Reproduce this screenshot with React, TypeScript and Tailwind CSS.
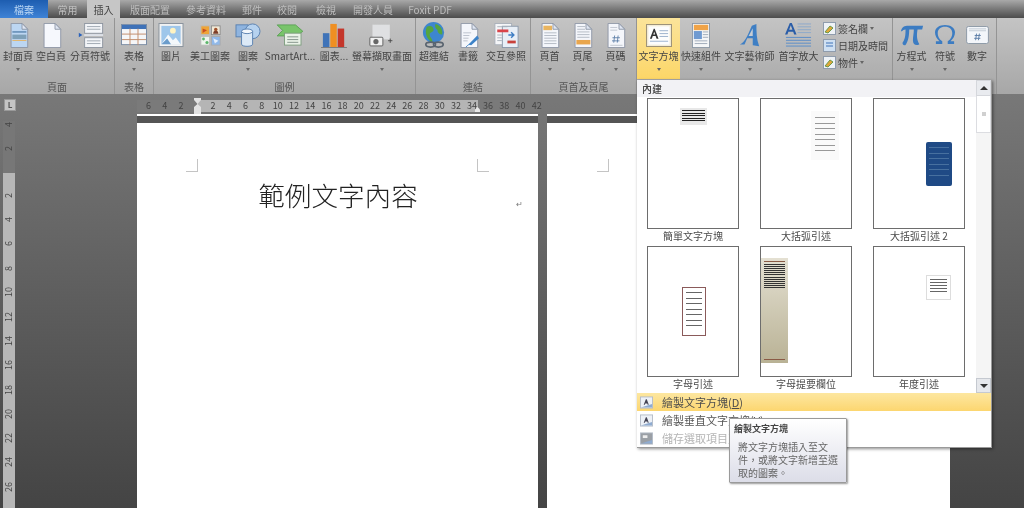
import React from "react";

const Doc = ({ children, fill = "#f4f6fb" }: { children?: React.ReactNode; fill?: string }) => (
  <svg width="21" height="25" viewBox="0 0 24 28" preserveAspectRatio="none">
    <path d="M3.5 .5H16L22.5 7V27.5H3.5Z" fill={fill} stroke="#8a93a3" />
    <path d="M16 .5V7H22.5Z" fill="#dfe6f2" stroke="#8a93a3" />
    {children}
  </svg>
);

const Icons: Record<string, React.ReactNode> = {
  cover: (
    <Doc fill="#bcd6f2">
      <rect x="5" y="9" width="16" height="2" fill="#6f96bd" />
      <rect x="5" y="13" width="16" height="5" fill="#7ea0b8" />
      <rect x="5" y="19" width="16" height="1" fill="#e7b25c" />
    </Doc>
  ),
  blank: <Doc fill="#f6f8fd" />,
  pagebreak: (
    <svg width="27" height="25" viewBox="0 0 30 28" preserveAspectRatio="none">
      <rect x="8.5" y=".5" width="20" height="11" fill="#f3f5f8" stroke="#8b939e" />
      <path d="M11 4H26M11 7H26" stroke="#9aa3ad" />
      <path d="M8 13.5H29" stroke="#dfe3ea" strokeWidth="2" />
      <rect x="8.5" y="16.5" width="20" height="11" fill="#f3f5f8" stroke="#8b939e" />
      <path d="M11 20H26M11 23H26" stroke="#9aa3ad" />
      <path d="M2 11L6 13.5L2 16Z" fill="#2a62bb" />
    </svg>
  ),
  table: (
    <svg width="26" height="22" viewBox="0 0 26 24" preserveAspectRatio="none">
      <rect x=".5" y=".5" width="25" height="22" fill="#f5f6f8" stroke="#7b8da5" />
      <rect x="1" y="1" width="24" height="4.5" fill="#3f72b8" />
      <path d="M9 5V23M17 5V23M1 11H25M1 17H25" stroke="#c18d6b" />
    </svg>
  ),
  picture: (
    <svg width="26" height="25" viewBox="0 0 26 26">
      <rect x=".5" y=".5" width="25" height="24" fill="#f1f2f2" stroke="#88919c" />
      <rect x="3" y="3" width="20" height="19" fill="#9ec6ea" />
      <circle cx="15" cy="8" r="3" fill="#fff3c2" />
      <path d="M3 22L10 12L15 18L18 15L23 22Z" fill="#f4f8fb" />
      <path d="M3 22L9 16L13 22Z" fill="#6a9ccb" />
    </svg>
  ),
  clip: (
    <svg width="21" height="21" viewBox="0 0 24 24">
      <rect x="1" y="1" width="10" height="10" fill="#eea437" stroke="#bbb" />
      <path d="M3 4L8 6L3 9Z" fill="#c94f22" />
      <rect x="13" y="1" width="10" height="10" fill="#f2e9d6" stroke="#888" />
      <path d="M15 10C15 5 21 5 21 10Z" fill="#7b3f2b" />
      <circle cx="18" cy="5" r="2" fill="#a0522d" />
      <rect x="1" y="13" width="10" height="10" fill="#eef5ee" stroke="#bbb" />
      <circle cx="4" cy="16" r="1.6" fill="#5bb56a" />
      <circle cx="8" cy="20" r="1.8" fill="#5bb56a" />
      <rect x="13" y="13" width="10" height="10" fill="#8fb8ea" stroke="#aaa" />
      <path d="M15 15L21 18L17 21Z" fill="#e3effc" />
    </svg>
  ),
  shapes: (
    <svg width="26" height="24" viewBox="0 0 28 26">
      <rect x="1" y="2" width="13" height="13" fill="#8fb4df" stroke="#577fb0" />
      <circle cx="19" cy="9" r="8" fill="#b6d2ef" stroke="#577fb0" />
      <path d="M7 9V23C7 26 19 26 19 23V9Z" fill="#dce9f6" stroke="#577fb0" />
      <ellipse cx="13" cy="9" rx="6" ry="2.5" fill="#f2f7fc" stroke="#577fb0" />
    </svg>
  ),
  smartart: (
    <svg width="28" height="22" viewBox="0 0 30 24">
      <path d="M1 1H21L29 8L22 13H1L7 7Z" fill="#79c46b" stroke="#5aa153" />
      <rect x="9" y="10" width="18" height="13" fill="#eaf2e8" stroke="#7d9d7e" />
      <path d="M12 14H24M12 17H24M12 20H24" stroke="#7f8f85" />
    </svg>
  ),
  chart: (
    <svg width="26" height="25" viewBox="0 0 28 27">
      <rect x="2" y="11" width="7" height="15" fill="#3f73b8" />
      <rect x="10" y="1" width="7" height="25" fill="#ef8f22" />
      <rect x="18" y="6" width="7" height="20" fill="#c4362b" />
      <path d="M0 26.5H28" stroke="#777" />
    </svg>
  ),
  screenshot: (
    <svg width="26" height="25" viewBox="0 0 30 26">
      <rect x="4" y=".5" width="20" height="17" fill="#dfe0e2" />
      <rect x="1" y="15" width="15" height="10" rx="1" fill="#f0f0f0" stroke="#555" />
      <circle cx="8" cy="20" r="3" fill="#666" />
      <path d="M22 19H27M24.500 16.500V21.500" stroke="#444" />
    </svg>
  ),
  link: (
    <svg width="25" height="26" viewBox="0 0 26 27">
      <circle cx="12" cy="11" r="11" fill="#3d86cf" />
      <path d="M5 5C9 3 12 5 12 8C12 11 8 10 8 13C8 16 11 17 11 21C6 20 2 12 5 5ZM14 2C19 3 22 8 21 13C18 13 16 11 16 8C14 7 13 4 14 2Z" fill="#55a53f" />
      <ellipse cx="9" cy="23.500" rx="5" ry="2.500" fill="none" stroke="#5a6570" strokeWidth="1.800" />
      <ellipse cx="17" cy="23.500" rx="5" ry="2.500" fill="none" stroke="#5a6570" strokeWidth="1.800" />
    </svg>
  ),
  bookmark: (
    <Doc>
      <path d="M6 11H15M6 14H13M6 17H12M6 20H11" stroke="#b6bcc8" />
      <path d="M12 24L22 14L24 17L15 25Z" fill="#3c82c8" />
      <path d="M9 27C11 25 13 23 15 24" stroke="#3c82c8" fill="none" />
    </Doc>
  ),
  xref: (
    <svg width="25" height="25" viewBox="0 0 26 27">
      <rect x=".5" y=".5" width="18" height="23" fill="#f5f6f8" stroke="#a9b0ba" />
      <rect x="8.500" y="3.500" width="17" height="23" fill="#e8eff7" stroke="#8a98a9" />
      <rect x="3" y="7" width="12" height="3" fill="#d9444a" />
      <path d="M3 4H14M3 13H8M3 16H8M3 19H8" stroke="#a8b0ba" />
      <rect x="14" y="19" width="9" height="3" fill="#c8423c" />
      <path d="M15 13H21M18 10L21 13L18 16" stroke="#3f7ec4" fill="none" strokeWidth="1.500" />
    </svg>
  ),
  header: (
    <Doc>
      <rect x="5" y="3" width="10" height="5" fill="#e9b45f" />
      <path d="M6 11H20M6 14H20M6 17H20M6 20H20M6 23H20" stroke="#aeb5c0" />
    </Doc>
  ),
  footer: (
    <Doc>
      <path d="M6 4H15M6 7H15M6 10H20M6 13H20M6 16H20" stroke="#aeb5c0" />
      <rect x="5" y="19" width="16" height="5" fill="#e9a64d" />
    </Doc>
  ),
  pagenum: (
    <Doc>
      <path d="M6 5H14M6 8H14" stroke="#bcc2cc" />
      <path d="M11 14L10 22M15 14L14 22M8.500 16.500H17M8 20H16.500" stroke="#5d7fa8" />
      <path d="M6 25H20" stroke="#bcc2cc" />
    </Doc>
  ),
  textbox: (
    <svg width="26" height="23" viewBox="0 0 27 24">
      <rect x=".5" y=".5" width="26" height="23" fill="#f3ecd8" stroke="#9a8f76" />
      <rect x="2.500" y="2.500" width="22" height="19" fill="#fdfdfd" />
      <path d="M4 15.500L8 5H9L13 15.500H11L10 12.500H7L6 15.500ZM7.500 11H9.500L8.500 8Z" fill="#333" />
      <path d="M14 7H23M14 10H23M14 13H23M4 18H23" stroke="#9bb1cc" />
    </svg>
  ),
  parts: (
    <svg width="18" height="25" viewBox="0 0 20 28" preserveAspectRatio="none">
      <rect x=".5" y=".5" width="19" height="27" fill="#f5f6f7" stroke="#8b97a5" />
      <rect x="2" y="2" width="16" height="6" fill="#f0a347" />
      <rect x="2" y="9" width="9" height="9" fill="#6f9ad1" />
      <path d="M12 10H18M12 13H18M12 16H18M3 20H17M3 23H17" stroke="#9aa5b5" />
    </svg>
  ),
  wordart: (
    <svg width="22" height="25" viewBox="0 0 24 28" preserveAspectRatio="none">
      <path d="M1 24C6 22 9 15 14 3L19 1C19 9 19 18 22 26L15 25L15 17L9 17L6 24Z" fill="#3f7fc4" />
      <path d="M10.500 14.500L15 6V14.500Z" fill="#c8cdd3" />
    </svg>
  ),
  dropcap: (
    <svg width="27" height="26" viewBox="0 0 28 27">
      <path d="M0 13L5 1H7L12 13H9.500L8.500 10H3.500L2.500 13ZM4.300 8H7.700L6 3.500Z" fill="#2a5da8" />
      <path d="M13 2H27M13 5H27M13 8H27M13 11H27" stroke="#8da9ca" />
      <path d="M1 16H27M1 19H27M1 22H27M1 25H27" stroke="#5a8cc8" />
    </svg>
  ),
  pi: (
    <svg width="24" height="22" viewBox="0 0 26 24" preserveAspectRatio="none">
      <path d="M1 8C2 3 5 2 9 2H25L24 6H19C18 12 18 17 21 22C18 24 14 23 14 18C14 14 15 10 15 6H10C10 12 9 19 6 23C4 24 2 22 3 20C6 16 6 10 6 6C4 6 3 7 2 8Z" fill="#3c7cc2" />
    </svg>
  ),
  omega: (
    <svg width="22" height="20" viewBox="0 0 24 22">
      <path d="M2 21H9V18C5 15 4 12 4 9C4 5 7 2 12 2C17 2 20 5 20 9C20 12 19 15 15 18V21H22V18H18C21 15 23 12 23 8C23 3 18 0 12 0C6 0 1 3 1 8C1 12 3 15 6 18H2Z" fill="#3c7cc2" />
    </svg>
  ),
  numeral: (
    <svg width="23" height="18" viewBox="0 0 24 19">
      <rect x=".5" y=".5" width="23" height="18" rx="2" fill="#f3f6fa" stroke="#8b97a5" />
      <path d="M3 3H21M3 5H21" stroke="#c2cad5" />
      <path d="M11 8L10 15M14 8L13 15M9 10H15.500M8.500 13H15" stroke="#5d7fa8" />
    </svg>
  ),
};

const Caret = () => <span className="w-0 h-0 border-x-[2.5px] border-x-transparent border-t-[3px] border-t-[#666]" />;

const RibbonButton = ({
  w,
  icon,
  label,
  arrow,
  active,
}: {
  w: string;
  icon: string;
  label: string;
  arrow?: boolean;
  active?: boolean;
}) => (
  <div
    className={`${w} h-[61px] shrink-0 flex flex-col items-center ${
      active ? "bg-gradient-to-b from-[#fbe49a] to-[#fcd667]" : ""
    }`}
  >
    <div className="h-[31px] pt-[3px] flex items-center justify-center">{Icons[icon]}</div>
    <div className="h-[14px] leading-[14px] text-[10px] text-[#444] whitespace-nowrap">{label}</div>
    {arrow && (
      <div className="h-[12px] flex items-center justify-center">
        <Caret />
      </div>
    )}
  </div>
);

const Group = ({ w, label, children, pl }: { w: string; label?: string; children: React.ReactNode; pl?: string }) => (
  <div className={`${w} shrink-0 h-full flex flex-col border-r border-r-[#949494]`}>
    <div className={`h-[61px] flex ${pl ?? ""}`}>{children}</div>
    <div className="flex-1 flex items-center justify-center text-[10px] text-[#555]">{label}</div>
  </div>
);

const tabs: [string, string][] = [
  ["w-[39px]", "常用"],
  ["w-[33px]", "插入"],
  ["w-[60px]", "版面配置"],
  ["w-[52px]", "參考資料"],
  ["w-[40px]", "郵件"],
  ["w-[30px]", "校閱"],
  ["w-[48px]", "檢視"],
  ["w-[46px]", "開發人員"],
  ["w-[68px]", "Foxit PDF"],
];

const rulerLeft = ["6", "4", "2"];
const rulerMid = ["2", "4", "6", "8", "10", "12", "14", "16", "18", "20", "22", "24", "26", "28", "30", "32", "34"];
const rulerRight = ["36", "38", "40", "42"];
const RulerNum = ({ n }: { n: string }) => (
  <span className="w-[16.2px] shrink-0 text-center text-[9px] leading-[12px]">{n}</span>
);

const VNum = ({ n, h }: { n: string; h: string }) => (
  <div className={`${h} shrink-0 flex items-center justify-center`}>
    <span className="[writing-mode:vertical-rl] rotate-180 text-[9px] leading-[10px] text-[#444]">{n}</span>
  </div>
);

const Corner = () => <div className="w-[12px] h-[13px] border-r border-b border-[#c4c4c4]" />;
const CornerR = () => <div className="w-[12px] h-[13px] border-l border-b border-[#c4c4c4]" />;

const Lines = ({ n, color = "bg-[#555]", gap = "gap-[2px]" }: { n: number; color?: string; gap?: string }) => (
  <div className={`flex flex-col ${gap}`}>
    {Array.from({ length: n }).map((_, i) => (
      <div key={i} className={`h-[1px] w-full ${color}`} />
    ))}
  </div>
);

const Thumb = ({ label, pad, children }: { label: string; pad: string; children: React.ReactNode }) => (
  <div className="w-[92px] h-[148px] flex flex-col items-center">
    <div className={`w-[92px] h-[131px] shrink-0 border border-[#6d6d6d] bg-white flex items-start ${pad}`}>{children}</div>
    <div className="text-[10px] leading-[13px] pt-[0px] text-[#4a4a4a] whitespace-nowrap">{label}</div>
  </div>
);

const MenuIcon = ({ kind }: { kind: "a" | "v" | "s" }) => (
  <svg width="13" height="13" viewBox="0 0 14 13">
    <rect x=".5" y=".5" width="13" height="12" fill={kind === "s" ? "#9a9fa5" : "#edf1f7"} stroke="#b4bcc8" />
    <path d="M1 12L13 12L13 8Z" fill="#8fabd0" />
    {kind !== "s" && <path d="M4 9L6.300 3H7.300L9.500 9H8.300L7.800 7.500H5.700L5.200 9Z" fill="#445" />}
    {kind === "s" && <rect x="3" y="3" width="5" height="3" fill="#eee" />}
  </svg>
);

export default function App() {
  return (
    <div
      className="relative w-[1024px] h-[508px] overflow-hidden flex flex-col bg-[#555] blur-[0.5px]"
      style={{ fontFamily: '"Noto Sans CJK TC", "Noto Sans", sans-serif' }}
    >
      {/* tabs */}
      <div className="h-[18px] flex shrink-0 bg-gradient-to-b from-[#a9a9a9] to-[#4c4c4c] text-[10px]">
        <div className="w-[48px] flex items-center justify-center bg-gradient-to-b from-[#1d5db0] to-[#3f83d6] text-[#bcd8f5]">檔案</div>
        {tabs.map(([w, t]) => (
          <div
            key={t}
            className={`${w} flex items-center justify-center whitespace-nowrap ${
              t === "插入" ? "bg-[#c6c6c6] text-[#444]" : "text-[#bdbdbd]"
            }`}
          >
            {t}
          </div>
        ))}
      </div>

      {/* ribbon */}
      <div className="h-[76px] shrink-0 flex bg-gradient-to-b from-[#c4c4c4] to-[#a7a7a7]">
        <Group w="w-[115px]" label="頁面">
          <RibbonButton w="w-[36px]" icon="cover" label="封面頁" arrow />
          <RibbonButton w="w-[30px]" icon="blank" label="空白頁" />
          <RibbonButton w="w-[48px]" icon="pagebreak" label="分頁符號" />
        </Group>
        <Group w="w-[39px]" label="表格">
          <RibbonButton w="w-[38px]" icon="table" label="表格" arrow />
        </Group>
        <Group w="w-[262px]" label="圖例">
          <RibbonButton w="w-[34px]" icon="picture" label="圖片" />
          <RibbonButton w="w-[44px]" icon="clip" label="美工圖案" />
          <RibbonButton w="w-[32px]" icon="shapes" label="圖案" arrow />
          <RibbonButton w="w-[52px]" icon="smartart" label="SmartArt..." />
          <RibbonButton w="w-[36px]" icon="chart" label="圖表..." />
          <RibbonButton w="w-[60px]" icon="screenshot" label="螢幕擷取畫面" arrow />
        </Group>
        <Group w="w-[115px]" label="連結">
          <RibbonButton w="w-[36px]" icon="link" label="超連結" />
          <RibbonButton w="w-[32px]" icon="bookmark" label="書籤" />
          <RibbonButton w="w-[44px]" icon="xref" label="交互參照" />
        </Group>
        <Group w="w-[106px]" label="頁首及頁尾" pl="pl-[2px]">
          <RibbonButton w="w-[33px]" icon="header" label="頁首" arrow />
          <RibbonButton w="w-[33px]" icon="footer" label="頁尾" arrow />
          <RibbonButton w="w-[33px]" icon="pagenum" label="頁碼" arrow />
        </Group>
        <Group w="w-[256px]">
          <RibbonButton w="w-[43px]" icon="textbox" label="文字方塊" arrow active />
          <RibbonButton w="w-[42px]" icon="parts" label="快速組件" arrow />
          <RibbonButton w="w-[55px]" icon="wordart" label="文字藝術師" arrow />
          <RibbonButton w="w-[43px]" icon="dropcap" label="首字放大" arrow />
          <div className="flex flex-col pt-[2px] pl-[3px] text-[10px] text-[#444] whitespace-nowrap">
            {[
              ["簽名欄", true],
              ["日期及時間", false],
              ["物件", true],
            ].map(([t, a]) => (
              <div key={t as string} className="h-[17px] flex items-center gap-[2px]">
                <svg width="13" height="13" viewBox="0 0 13 13">
                  <rect x=".5" y=".5" width="12" height="12" fill={a ? "#eef2f6" : "#cfe0f2"} stroke="#8f9cad" />
                  <path d={a ? "M2 10L7 4L10 6L5 11Z" : "M3 4H10M3 7H10"} fill={a ? "#e0a63a" : "none"} stroke={a ? "#6b9a4a" : "#3f72b8"} />
                </svg>
                <span>{t as string}</span>
                {a && <Caret />}
              </div>
            ))}
          </div>
        </Group>
        <Group w="w-[104px]" pl="pl-[1px]">
          <RibbonButton w="w-[35px]" icon="pi" label="方程式" arrow />
          <RibbonButton w="w-[32px]" icon="omega" label="符號" arrow />
          <RibbonButton w="w-[32px]" icon="numeral" label="數字" />
        </Group>
      </div>

      {/* workspace */}
      <div className="flex-1 min-h-0 flex bg-gradient-to-b from-[#787878] to-[#444444]">
        <div className="w-[137px] shrink-0 pl-[3px] pt-[5px] flex flex-col">
          <div className="ml-[1px] w-[12px] h-[12px] border border-[#999] bg-[#c4c4c4] flex items-center justify-center text-[8px] font-bold leading-none text-[#555]">
            L
          </div>
          <div className="mt-[10px] w-[12px] flex-1 flex flex-col overflow-hidden">
            <div className="h-[52px] shrink-0 bg-[#777] flex flex-col">
              <VNum n="4" h="h-[6px]" />
              <VNum n="2" h="h-[42px]" />
            </div>
            <div className="flex-1 bg-[#b7b7b7] pt-[10px] flex flex-col overflow-hidden">
              {["2", "4", "6", "8", "10", "12", "14", "16", "18", "20", "22", "24", "26"].map((n) => (
                <VNum key={n} n={n} h="h-[24.3px]" />
              ))}
            </div>
          </div>
        </div>

        <div className="flex-1 min-w-0 flex flex-col pt-[6px]">
          {/* horizontal ruler */}
          <div className="relative h-[12px] flex shrink-0">
            <div className="w-[60px] shrink-0 bg-[#7a7a7a] flex justify-end pr-[8px] text-[#444]">
              {rulerLeft.map((n) => (
                <RulerNum key={n} n={n} />
              ))}
            </div>
            <div className="w-[281px] shrink-0 bg-[#b5b5b5] flex pl-[8px] text-[#444]">
              {rulerMid.map((n) => (
                <RulerNum key={n} n={n} />
              ))}
            </div>
            <div className="w-[62px] shrink-0 bg-[#7a7a7a] flex pl-[2px] text-[#444]">
              {rulerRight.map((n) => (
                <RulerNum key={n} n={n} />
              ))}
            </div>
            <svg className="absolute left-[57px] -top-[2px]" width="7" height="16" viewBox="0 0 7 16">
              <path d="M0 0H7V2L3.500 6L7 9V16H0V9L3.500 6L0 2Z" fill="#e2e2e2" />
            </svg>
            <svg className="absolute left-[338px] top-[7px]" width="5" height="5" viewBox="0 0 5 5">
              <path d="M2.500 0L5 2.500V5H0V2.500Z" fill="#e8e8e8" />
            </svg>
          </div>

          {/* pages */}
          <div className="mt-[2px] flex gap-[9px] flex-1 min-h-0">
            <div className="w-[401px] shrink-0 flex flex-col">
              <div className="h-[2px] bg-white" />
              <div className="h-[7px] bg-[#555]" />
              <div className="relative flex-1 bg-white pt-[36px] px-[49px]">
                <div className="flex justify-between">
                  <Corner />
                  <CornerR />
                </div>
                <div className="mt-[5px] text-center text-[26.6px] leading-[36px] font-light text-[#222] pl-[1px]">
                  範例文字內容
                </div>
                <span className="absolute left-[379px] top-[77px] text-[8px] leading-none text-[#777]">↵</span>
              </div>
            </div>
            <div className="w-[403px] shrink-0 flex flex-col">
              <div className="h-[2px] bg-white" />
              <div className="h-[7px] bg-[#555]" />
              <div className="flex-1 bg-white pt-[36px] pl-[50px]">
                <Corner />
              </div>
            </div>
          </div>
        </div>
      </div>

      {/* gallery dropdown */}
      <div className="absolute left-[637px] top-[80px] w-[355px] h-[368px] bg-white border-r border-b border-[#9a9a9a] shadow-[1px_1px_3px_rgba(0,0,0,0.45)] flex flex-col">
        <div className="h-[313px] shrink-0 flex">
          <div className="flex-1 flex flex-col">
            <div className="h-[17px] shrink-0 bg-[#f2f2f5] pl-[5px] flex items-center text-[10px] font-medium text-[#444]">內建</div>
            <div className="pt-[1px] pl-[10px] grid grid-cols-[92px_92px_92px] gap-x-[21px]">
              <Thumb label="簡單文字方塊" pad="pl-[32px] pt-[9px]">
                <div className="w-[27px] h-[17px] bg-[#e8e8e8] p-[2px]">
                  <Lines n={5} color="bg-[#222]" gap="gap-[1.500px]" />
                </div>
              </Thumb>
              <Thumb label="大括弧引述" pad="pl-[50px] pt-[12px]">
                <div className="w-[28px] h-[49px] bg-[#fafafa] px-[4px] py-[6px]">
                  <Lines n={7} color="bg-[#999]" gap="gap-[4.500px]" />
                </div>
              </Thumb>
              <Thumb label="大括弧引述 2" pad="pl-[52px] pt-[43px]">
                <div className="w-[26px] h-[44px] rounded-[2px] bg-[#1f4a85] px-[3px] py-[5px]">
                  <Lines n={6} color="bg-[#47709f]" gap="gap-[4.500px]" />
                </div>
              </Thumb>
              <Thumb label="字母引述" pad="pl-[34px] pt-[40px]">
                <div className="w-[24px] h-[49px] border border-[#8a5a5a] px-[3px] py-[4px]">
                  <Lines n={7} color="bg-[#666]" gap="gap-[4.500px]" />
                </div>
              </Thumb>
              <Thumb label="字母提要欄位" pad="pl-0 pt-[11px]">
                <div className="w-[27px] h-[105px] bg-gradient-to-b from-[#e4e0d2] to-[#b9b295] px-[3px] pt-[3px] flex flex-col">
                  <div className="h-[1px] bg-[#8a5a45] mb-[2px]" />
                  <Lines n={6} color="bg-[#333]" gap="gap-[1px]" />
                  <div className="h-[2px]" />
                  <Lines n={6} color="bg-[#333]" gap="gap-[1px]" />
                  <div className="mt-auto mb-[3px] h-[1px] bg-[#8a5a45]" />
                </div>
              </Thumb>
              <Thumb label="年度引述" pad="pl-[52px] pt-[28px]">
                <div className="w-[25px] h-[25px] bg-white border border-[#ddd] px-[3px] py-[3px]">
                  <Lines n={5} color="bg-[#666]" />
                </div>
              </Thumb>
            </div>
          </div>
          {/* scrollbar */}
          <div className="w-[15px] shrink-0 flex flex-col bg-[#f5f5f5]">
            <div className="h-[16px] border border-[#d5d7dc] bg-[#e9ebef] flex items-center justify-center">
              <span className="w-0 h-0 border-x-[4px] border-x-transparent border-b-[4px] border-b-[#333]" />
            </div>
            <div className="h-[37px] border-x border-b border-[#dcdde1] bg-white flex items-center justify-center">
              <span className="w-[4px] h-[4px] bg-[#d0d0d0]" />
            </div>
            <div className="flex-1" />
            <div className="h-[15px] border border-[#c5c9d0] bg-[#e6e8ec] flex items-center justify-center">
              <span className="w-0 h-0 border-x-[4px] border-x-transparent border-t-[4px] border-t-[#333]" />
            </div>
          </div>
        </div>
        {/* menu rows */}
        <div className="h-[18px] flex items-center gap-[9px] pl-[3px] bg-gradient-to-b from-[#fde7a0] to-[#fcd66f] text-[11px] text-[#4b4b4b]">
          <MenuIcon kind="a" />
          <span>
            繪製文字方塊(<span className="underline">D</span>)
          </span>
        </div>
        <div className="h-[18px] flex items-center gap-[9px] pl-[3px] text-[11px] text-[#555]">
          <MenuIcon kind="v" />
          <span>繪製垂直文字方塊(V)</span>
        </div>
        <div className="h-[18px] flex items-center gap-[9px] pl-[3px] text-[11px] text-[#b5b5b5]">
          <MenuIcon kind="s" />
          <span>儲存選取項目至文字方塊庫</span>
        </div>
      </div>

      {/* tooltip */}
      <div className="absolute left-[729px] top-[418px] w-[118px] h-[65px] border border-[#9a9a9a] rounded-[1px] bg-gradient-to-b from-white to-[#dcdde8] shadow-[1px_1px_2px_rgba(0,0,0,0.4)] pl-[4px] pt-[3px]">
        <div className="text-[9px] leading-[13px] font-bold text-[#444]">繪製文字方塊</div>
        <div className="mt-[5px] pl-[4px] pr-[2px] text-[10px] leading-[13px] text-[#666]">
          將文字方塊插入至文
          <br />
          件，或將文字新增至選
          <br />
          取的圖案。
        </div>
      </div>
    </div>
  );
}
